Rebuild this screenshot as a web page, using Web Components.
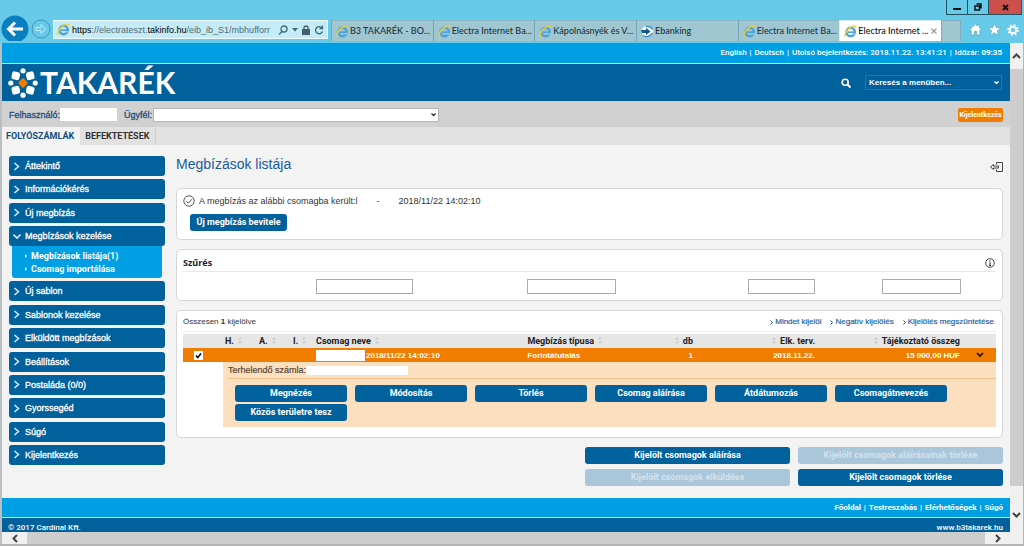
<!DOCTYPE html>
<html lang="hu">
<head>
<meta charset="utf-8">
<title>Electra Internet Banking</title>
<style>
  html, body { margin: 0; height: 100%; overflow: hidden; }
  body { font-family: Roboto, "Liberation Sans", Arial, sans-serif; font-size: 9px; line-height: 12px; color: #333; }
</style>
</head>
<body>
<browser-window></browser-window>

<script>
const define = (name, html) => {
  const tpl = document.createElement('template');
  tpl.innerHTML = html;
  customElements.define(name, class extends HTMLElement {
    constructor() {
      super();
      this.attachShadow({ mode: 'open' }).appendChild(tpl.content.cloneNode(true));
      const label = this.getAttribute('label');
      const target = this.shadowRoot.querySelector('[data-label]');
      if (label && target) target.textContent = label;
      if (this.hasAttribute('disabled')) this.shadowRoot.querySelector('button').disabled = true;
    }
  });
};

define('ie-icon', `
<style>:host{display:block;width:13px;height:13px;flex:none}svg{display:block}</style>
<svg width="13" height="13" viewBox="0 0 13 13" fill="none">
  <circle cx="6.6" cy="7" r="4.2" stroke="#4ba3da" stroke-width="2.4"/>
  <path d="M4 7.2h6.6" stroke="#4ba3da" stroke-width="1.7"/>
  <path d="M8.6 8.8h3" stroke="#a5cfe0" stroke-width="1.2"/>
  <path d="M1.6 11.6C-.4 10 3 4.400 7 2.200c2.600-1.500 5-1.600 4.600.6" stroke="#e9cf3c" stroke-width="1.400"/>
</svg>`);

define('ebank-icon', `
<style>:host{display:block;width:13px;height:13px;flex:none}svg{display:block}</style>
<svg width="13" height="13" viewBox="0 0 13 13">
  <circle cx="6.500" cy="6.500" r="5.800" fill="#f4fafc"/>
  <path d="M0 5h5V3l4.500 3.500L5 10V8H1z" fill="#14558c"/>
  <path d="M2 10.500c3 2 8 1 9.500-2.500M5 1.500c3-.5 5.500 1 6.500 3" fill="none" stroke="#2f86bd" stroke-width="1.300"/>
</svg>`);

define('browser-tab', `
<style>
:host{display:flex;flex:1 1 0;min-width:0;box-sizing:border-box;height:21px;align-items:center;gap:1px;padding:0 4px;
  background:#9fc6d1;border-left:1px solid #6fa6b8;border-top:1px solid #8ab5c2;color:#20343c}
:host([active]){background:#fff;border-color:#d6eef6;color:#111}
span{font:500 9px/14px Lato,"Noto Sans",sans-serif;white-space:nowrap}
.close{margin-left:auto;display:none;border:0;padding:0;background:none}
:host([active]) .close{display:block}
svg{display:block}
</style>
<slot></slot><span data-label></span>
<button class="close" aria-label="Lap bezárása"><svg width="6" height="6" viewBox="0 0 6 6" stroke="#999" stroke-width="1.200"><path d="M.5.5l5 5M5.500.5l-5 5"/></svg></button>`);

define('browser-chrome', `
<style>
:host{display:block;background:#67cae9}
.title{display:flex;justify-content:flex-end;height:14px;padding-right:2px}
.title button{box-sizing:border-box;display:flex;align-items:center;justify-content:center;width:21px;height:15px;padding:0;
  background:#67cae9;border:1px solid #23505f;border-top:0;border-right:0}
.title .x{width:34px;background:#c9504b;border-right:1px solid #7a3a3a}
.nav{display:flex;align-items:flex-end;height:29px;box-sizing:border-box;padding-left:1px}
.nav button{border:0;background:none;padding:0;display:block}
svg{display:block}
.back{height:26px;overflow:hidden;margin-bottom:2px}
.nav .fwd{margin:0 2px 4px 2px}
.addr{display:flex;align-items:center;box-sizing:border-box;width:275px;height:19px;margin-bottom:4px;padding:0 3px;
  background:#c4ebf6;border:1px solid #f2fbfe}
.url{flex:1;min-width:0;margin-left:2px;white-space:nowrap;color:#4c6d79;font:9px/14px "Liberation Sans",Arial,sans-serif}
.url b{font-weight:400;color:#000}
.tools{display:flex;align-items:center;gap:4px;padding-left:3px}
.tabs{display:flex;flex:1;min-width:0;margin:0 8px 2px 3px}
.newtab{box-sizing:border-box;width:20px;height:21px;background:#9fc6d1!important;border:1px solid #7badbd!important;border-bottom:0!important}
.right{display:flex;gap:6px;margin:0 5px 7px 0}
</style>
<div class="title">
  <button aria-label="Kis méret"><svg width="8" height="8"><path d="M0 5h8v2H0z" fill="#111"/></svg></button>
  <button aria-label="Előző méret"><svg width="8" height="8" fill="none" stroke="#111" stroke-width="1.500"><path d="M1 3h4.500v4H1zM2.500 1H7v4.500"/></svg></button>
  <button class="x" aria-label="Bezárás"><svg width="7" height="7" stroke="#111" stroke-width="1.800"><path d="M1 1l5 5M6 1L1 6"/></svg></button>
</div>
<div class="nav">
  <button class="back" aria-label="Vissza"><svg width="28" height="28" viewBox="0 0 28 28"><circle cx="14" cy="14" r="13.500" fill="#0a7fc0"/><path d="M22 14H8M14 7.500L7.500 14l6.500 6.500" fill="none" stroke="#fff" stroke-width="3"/></svg></button>
  <button class="fwd" aria-label="Előre"><svg width="20" height="20" viewBox="0 0 20 20" fill="none"><circle cx="10" cy="10" r="9" stroke="#4493b6"/><path d="M5 8.500h5V5.500L14.500 10 10 14.500v-3H5z" stroke="#c5eefa"/></svg></button>
  <div class="addr">
    <ie-icon></ie-icon>
    <div class="url"><b>https</b>://electrateszt.<b>takinfo.hu</b>/eib_ib_S1/mbhufforr</div>
    <div class="tools">
      <svg width="10" height="10" fill="none" stroke="#3b6a7b" stroke-width="1.300"><circle cx="6" cy="4" r="3"/><path d="M4 6.500L1 9.500"/></svg>
      <svg width="6" height="4"><path d="M0 0h6L3 3.500z" fill="#3b6a7b"/></svg>
      <svg width="8" height="10"><path d="M0 4h8v6H0z" fill="#41606b"/><path d="M2 4.500V3a2 2 0 014 0v1.500" fill="none" stroke="#41606b" stroke-width="1.400"/></svg>
      <svg width="10" height="10" fill="none" stroke="#3b6a7b" stroke-width="1.300"><path d="M8 3A3.600 3.600 0 108.500 6.500M8.500.5V3.500H5.500"/></svg>
    </div>
  </div>
  <div class="tabs">
    <browser-tab label="B3 TAKARÉK - BO..."><ie-icon></ie-icon></browser-tab>
    <browser-tab label="Electra Internet Ba..."><ie-icon></ie-icon></browser-tab>
    <browser-tab label="Kápolnásnyék és V..."><ie-icon></ie-icon></browser-tab>
    <browser-tab label="Ebanking"><ebank-icon></ebank-icon></browser-tab>
    <browser-tab label="Electra Internet Ba..."><ie-icon></ie-icon></browser-tab>
    <browser-tab label="Electra Internet ..." active><ie-icon></ie-icon></browser-tab>
    <button class="newtab" aria-label="Új lap"></button>
  </div>
  <div class="right">
    <button aria-label="Kezdőlap"><svg width="13" height="13" viewBox="0 0 12 12"><path d="M6 1L.5 6.200l.8.800L2 6.400V11h3V7.500h2V11h3V6.400l.7.600.8-.8L9.500 4.300V1.500H8v1.400z" fill="#fff" stroke="#3c8fae" stroke-width=".5"/></svg></button>
    <button aria-label="Kedvencek"><svg width="13" height="13" viewBox="0 0 12 12"><path d="M6 .5l1.600 3.900 4.100.2-3.200 2.600 1.100 4.100L6 9l-3.600 2.300 1.100-4.100L.3 4.600l4.100-.2z" fill="#fff" stroke="#3c8fae" stroke-width=".4"/></svg></button>
    <button aria-label="Eszközök"><svg width="12" height="12" viewBox="0 0 12 12" fill="none" stroke="#fff"><circle cx="6" cy="6" r="3.200" stroke-width="1.800"/><circle cx="6" cy="6" r="4.900" stroke-width="1.800" stroke-dasharray="1.900 1.950"/></svg></button>
  </div>
</div>`);

define('tk-logo', `
<style>
:host{display:flex;align-items:center;gap:2px;color:#fff;font:bold 30px/37px Lato,"Noto Sans",sans-serif}
svg{display:block}
</style>
<svg width="30" height="30" viewBox="-14.500 -14.500 29 29" fill="#fff">
  <rect x="-3.600" y="-3.600" width="7.200" height="7.200" rx="1.500" fill="#ef7d00" transform="rotate(45)"/>
  <circle cy="-11.800" r="2.500"/><circle cy="11.800" r="2.500"/><circle cx="-11.800" r="2.500"/><circle cx="11.800" r="2.500"/>
  <rect x="-3.900" y="-3.900" width="7.800" height="7.800" rx="2.200" transform="translate(-7 -7)rotate(12)"/>
  <rect x="-3.900" y="-3.900" width="7.800" height="7.800" rx="2.200" transform="translate(7 -7)rotate(-12)"/>
  <rect x="-3.900" y="-3.900" width="7.800" height="7.800" rx="2.200" transform="translate(-7 7)rotate(-12)"/>
  <rect x="-3.900" y="-3.900" width="7.800" height="7.800" rx="2.200" transform="translate(7 7)rotate(12)"/>
</svg><span>TAKARÉK</span>`);

define('tk-header', `
<style>
:host{display:block}
a{color:inherit;text-decoration:none}
.top{display:flex;justify-content:flex-end;gap:3px;height:20px;line-height:20px;padding-right:8px;background:#009fe3;color:#fff;font-size:8px;font-weight:500;white-space:nowrap}
.main{display:flex;align-items:center;height:37px;padding:0 8px 0 6px;background:#00619c;border-top:1px solid #bfe0ef;border-bottom:1px solid #bcd3df}
svg{display:block}
.search{margin-left:auto;margin-right:14px;border:0;background:none;padding:0}
select{appearance:none;box-sizing:border-box;width:137px;height:15px;padding:0 3px;border:1px solid #1a7ab2;border-radius:0;color:#fff;
  font:bold 8px/12px "Liberation Sans",Arial,sans-serif;
  background:#00619c url("data:image/svg+xml,%3Csvg xmlns='http://www.w3.org/2000/svg' width='5' height='4' fill='none' stroke='white' stroke-width='1.300'%3E%3Cpath d='M.5.5l2 2 2-2'/%3E%3C/svg%3E") no-repeat right 2px center}
.user{display:flex;align-items:center;height:25px;box-sizing:border-box;padding:0 7px 0 7px;background:#d1d1d1;color:#1b4e81}
label{white-space:nowrap;font-family:"Liberation Sans",Arial,sans-serif;-webkit-text-stroke:.3px}
.user input{box-sizing:border-box;width:57px;height:13px;border:0;padding:0 2px;margin:0 7px 0 0;background:#fff}
.user select{width:286px;height:14px;margin-left:1px;border:1px solid #b5b5b5;color:#333;background-color:#fff;
  background-image:url("data:image/svg+xml,%3Csvg xmlns='http://www.w3.org/2000/svg' width='5' height='4' fill='none' stroke='%23333' stroke-width='1.300'%3E%3Cpath d='M.5.5l2 2 2-2'/%3E%3C/svg%3E")}
.logout{margin-left:auto;width:45px;height:14px;padding:0;border:0;border-radius:2px;background:#f07c00;color:#fff;font:bold 7px/14px Roboto,"Liberation Sans",sans-serif}
nav{display:flex;height:18px;background:#e1e1e1;line-height:18px;font-weight:bold;color:#333}
nav a{padding:0 6px 0 4px;border-right:1px solid #cfcfcf}
nav a[aria-current]{background:#f3f3f3;color:#124b80;border-color:#e1e1e1}
</style>
<div class="top"><a href="#">English</a><span>|</span><a href="#">Deutsch</a><span>|</span><span>Utolsó bejelentkezés: 2018.11.22. 13:41:21</span><span>|</span><span>Időzár: <b>09:35</b></span></div>
<div class="main">
  <tk-logo></tk-logo>
  <button class="search" aria-label="Keresés"><svg width="10" height="10" fill="none" stroke="#fff"><circle cx="4.200" cy="4.200" r="3" stroke-width="1.600"/><path d="M6.500 6.500l3 3" stroke-width="2"/></svg></button>
  <select aria-label="Keresés a menüben"><option>Keresés a menüben...</option></select>
</div>
<div class="user">
  <label for="u">Felhasználó:</label><input id="u" readonly>
  <label for="c">Ügyfél:</label><select id="c"><option></option></select>
  <button class="logout">Kijelentkezés</button>
</div>
<nav><a href="#" aria-current="page">FOLYÓSZÁMLÁK</a><a href="#">BEFEKTETÉSEK</a></nav>`);

define('menu-item', `
<style>
:host{display:block}
a.head{display:flex;align-items:center;height:20px;padding-left:4px;border-radius:3px;background:#00619c;color:#fff;text-decoration:none;font-family:"Liberation Sans",Arial,sans-serif;-webkit-text-stroke:.3px}
svg{display:block;width:8px;margin-right:4px}
.down{display:none}
:host([open]) .down{display:block}
:host([open]) .right{display:none}
:host([open]) slot{display:flex;flex-direction:column;margin:0 3px;padding:3px 0 3px 13px;background:#009fe3;border-radius:0 0 3px 3px}
</style>
<a class="head" href="#">
<svg class="right" width="8" height="9" fill="none" stroke="#cfe8f5" stroke-width="1.600"><path d="M1.500 1l4 3.500-4 3.500"/></svg>
<svg class="down" width="8" height="9" fill="none" stroke="#cfe8f5" stroke-width="1.600"><path d="M.5 2.500L4 6l3.500-3.500"/></svg>
<span data-label></span></a><slot></slot>`);

define('sub-item', `
<style>
:host{display:block}
a{display:flex;align-items:center;gap:4px;height:13px;color:#fff;text-decoration:none;font-weight:bold}
svg{display:block}
</style>
<a href="#"><svg width="2" height="4"><path d="M0 0l2 2-2 2z" fill="#fff"/></svg><span data-label></span></a>`);

define('side-menu', `
<style>
:host{display:flex;flex-direction:column;justify-content:space-between;min-height:309px;width:156px;flex:none}
</style>
<menu-item label="Áttekintő"></menu-item>
<menu-item label="Információkérés"></menu-item>
<menu-item label="Új megbízás"></menu-item>
<menu-item label="Megbízások kezelése" open><sub-item label="Megbízások listája(1)"></sub-item><sub-item label="Csomag importálása"></sub-item></menu-item>
<menu-item label="Új sablon"></menu-item>
<menu-item label="Sablonok kezelése"></menu-item>
<menu-item label="Elküldött megbízások"></menu-item>
<menu-item label="Beállítások"></menu-item>
<menu-item label="Postaláda (0/0)"></menu-item>
<menu-item label="Gyorssegéd"></menu-item>
<menu-item label="Súgó"></menu-item>
<menu-item label="Kijelentkezés"></menu-item>`);

define('tk-button', `
<style>
:host{display:block}
button{display:block;width:100%;height:17px;padding:0 6px;border:0;border-radius:3px;background:#00619c;color:#fff;
  font:bold 9px/17px Roboto,"Liberation Sans",sans-serif;text-align:center;white-space:nowrap}
button:disabled{background:#a9c6da;color:#d3e2ec}
</style>
<button data-label></button>`);

define('tk-panel', `
<style>
:host{display:block;box-sizing:border-box;background:#fff;border:1px solid #d6d6d6;border-radius:5px;padding:0 6px}
</style><slot></slot>`);

define('message-panel', `
<style>
:host{display:block}
.msg{display:flex;align-items:center;height:24px;gap:4px;font-family:"Liberation Sans",Arial,sans-serif}
.msg svg{display:block}
.gap{width:11px}
tk-button{width:97px;margin:1px 0 8px 7px}
</style>
<tk-panel>
<div class="msg"><svg width="12" height="12" fill="none" stroke="#555"><circle cx="6" cy="6" r="5.200"/><path d="M3.300 6.200l2 2 3.700-4"/></svg>
<span>A megbízás az alábbi csomagba került:l</span><span class="gap"></span><span>-</span><span class="gap"></span><time>2018/11/22 14:02:10</time></div>
<tk-button label="Új megbízás bevitele"></tk-button>
</tk-panel>`);

define('filter-panel', `
<style>
:host{display:block}
.head{display:flex;align-items:center;justify-content:space-between;box-sizing:border-box;height:22px;padding:5px 1px 0 0;border-bottom:1px solid #e8e8e8}
h2{margin:0;font:bold 9px/14px "Open Sans","Noto Sans",sans-serif;color:#222}
svg{display:block}
form{display:grid;grid-template-columns:133px 26% 1fr 67px 67px 79px 35px;height:28px;align-items:center}
input{box-sizing:border-box;height:15px;padding:0 2px;border:1px solid #aaa;background:#fff}
.a{grid-column:2;width:97px}.b{grid-column:3;width:89px}.c{grid-column:4}.d{grid-column:6}
</style>
<tk-panel>
<div class="head"><h2>Szűrés</h2><svg width="10" height="10" fill="none" stroke="#444"><circle cx="5" cy="5" r="4.300"/><path d="M5 4.300V8M5 2.200v1.300M4 7.500h2" stroke-width="1.200"/></svg></div>
<form><input class="a" aria-label="Csomag neve"><input class="b" aria-label="Megbízás típusa"><input class="c" aria-label="Elk. terv."><input class="d" aria-label="Tájékoztató összeg"></form>
</tk-panel>`);

define('sort-mark', `
<style>:host{display:inline-block;width:4px;height:7px;margin:0 4px}svg{display:block}</style>
<svg width="4" height="7" fill="#c8c8c8"><path d="M0 2.500L2 0l2 2.500zM0 4.500L2 7l2-2.500z"/></svg>`);

define('package-table', `
<style>
:host{display:block}
.bar{display:flex;align-items:center;gap:9px;height:18px;padding:2px 2px 0 0;border-bottom:1px solid #eee;font:8px/12px "Liberation Sans",Arial,sans-serif}
.bar a{color:#1b66a8;text-decoration:none;display:flex;align-items:center;gap:2px;-webkit-text-stroke:.2px}
.bar a:first-of-type{margin-left:auto}
svg{display:block}
table{width:100%;table-layout:fixed;border-collapse:collapse;margin:2px 0 10px}
th,td{padding:0 2px;text-align:left;white-space:nowrap;font-weight:bold}
thead th{height:14px;line-height:14px;background:#e6e6e6;color:#222}
.r{text-align:right}
.row td{height:14px;line-height:13px;background:#f07c00;color:#fff;font-family:"Liberation Sans",Arial,sans-serif;font-size:8px}
.mask{display:inline-block;width:49px;height:11px;background:#fff;vertical-align:middle;margin-right:1px}
input{appearance:none;box-sizing:border-box;display:block;width:9px;height:9px;margin:0 0 0 9px;
 background:#fff url("data:image/svg+xml,%3Csvg xmlns='http://www.w3.org/2000/svg' width='9' height='9' fill='none' stroke='black' stroke-width='1.500'%3E%3Cpath d='M2 4.500l1.800 2L7 2.500'/%3E%3C/svg%3E") center no-repeat}
.detail td{padding:0}
.box{box-sizing:border-box;height:65px;background:#fcdfbf;padding-left:5px;color:#5a4632}
.acct{display:flex;align-items:center;gap:0;height:16px;border-bottom:1px solid #f4c18c;font-weight:normal;font-family:"Liberation Sans",Arial,sans-serif;-webkit-text-stroke:.2px}
.acct i{width:102px;height:9px;background:#fff}
.acts{display:flex;flex-wrap:wrap;gap:2px 8px;padding:6px 0 0 7px}
.acts tk-button{width:112px}
</style>
<tk-panel>
<div class="bar"><span>Összesen <b>1</b> kijelölve</span>
<a href="#"><svg width="3" height="5" fill="none" stroke="#1b4e81"><path d="M.5.5l2 2-2 2"/></svg>Mindet kijelöl</a>
<a href="#"><svg width="3" height="5" fill="none" stroke="#1b4e81"><path d="M.5.5l2 2-2 2"/></svg>Negatív kijelölés</a>
<a href="#"><svg width="3" height="5" fill="none" stroke="#1b4e81"><path d="M.5.5l2 2-2 2"/></svg>Kijelölés megszüntetése</a></div>
<table>
<colgroup><col style="width:40px"><col style="width:34px"><col style="width:34px"><col style="width:23px"><col style="width:26%"><col><col style="width:60px"><col style="width:122px"><col style="width:145px"><col style="width:34px"></colgroup>
<thead><tr><th></th><th>H.<sort-mark></sort-mark></th><th>A.<sort-mark></sort-mark></th><th>I.<sort-mark></sort-mark></th><th>Csomag neve<sort-mark></sort-mark></th><th>Megbízás típusa<sort-mark></sort-mark></th><th class="r"><sort-mark></sort-mark>db</th><th class="r"><sort-mark></sort-mark>Elk. terv.</th><th class="r"><sort-mark></sort-mark>Tájékoztató összeg</th><th></th></tr></thead>
<tbody><tr class="row"><td><input type="checkbox" checked aria-label="Csomag kijelölése"></td><td></td><td></td><td></td><td><span class="mask"></span>2018/11/22 14:02:10</td><td>Forintátutalás</td><td class="r">1</td><td class="r">2018.11.22.</td><td class="r">15 000,00 HUF</td>
<td><svg width="8" height="6" style="margin-left:12px" fill="none" stroke="#111" stroke-width="1.600"><path d="M1 1l3 3 3-3"/></svg></td></tr>
<tr class="detail"><td></td><td colspan="9"><div class="box"><div class="acct">Terhelendő számla:<i></i></div>
<div class="acts"><tk-button label="Megnézés"></tk-button><tk-button label="Módosítás"></tk-button><tk-button label="Törlés"></tk-button><tk-button label="Csomag aláírása"></tk-button><tk-button label="Átdátumozás"></tk-button><tk-button label="Csomagátnevezés"></tk-button><tk-button label="Közös területre tesz"></tk-button></div></div></td></tr></tbody>
</table>
</tk-panel>`);

define('orders-page', `
<style>
:host{display:flex;flex-direction:column;flex:1;min-width:0}
.title{display:flex;align-items:flex-start;justify-content:space-between;height:19px;margin-bottom:13px}
h1{margin:0;font:14px/16px "Liberation Sans",Arial,sans-serif;color:#1a5a9c}
svg{display:block}
.title button{border:0;background:none;padding:6px 0 0}
message-panel,filter-panel{margin-bottom:9px}
.bulk{display:grid;grid-template-columns:205px 205px;gap:5px 8px;justify-content:end;margin-top:9px}
</style>
<div class="title"><h1>Megbízások listája</h1><button aria-label="Kilépés"><svg width="13" height="10" fill="none" stroke="#444"><path d="M6.500 2.500v-2h6v9h-6v-2M.5 5l3-2.500v1.500h5v2h-5v1.500z"/></svg></button></div>
<message-panel></message-panel>
<filter-panel></filter-panel>
<package-table></package-table>
<div class="bulk"><tk-button label="Kijelölt csomagok aláírása"></tk-button><tk-button label="Kijelölt csomagok aláírásainak törlése" disabled></tk-button>
<tk-button label="Kijelölt csomagok elküldése" disabled></tk-button><tk-button label="Kijelölt csomagok törlése"></tk-button></div>`);

define('tk-footer', `
<style>
:host{display:block;color:#fff;font-size:8px;font-weight:bold}
a{color:inherit;text-decoration:none}
.links{display:flex;justify-content:flex-end;gap:3px;height:19px;line-height:19px;padding-right:7px;background:#009fe3}
.legal{display:flex;justify-content:space-between;height:20px;line-height:20px;padding:0 7px 0 6px;background:#00619c;border-top:1px solid #bfe0ef}
.legal{font-weight:500}
</style>
<div class="links"><a href="#">Főoldal</a><span>|</span><a href="#">Testreszabás</a><span>|</span><a href="#">Elérhetőségek</a><span>|</span><a href="#">Súgó</a></div>
<div class="legal"><span>© 2017 Cardinal Kft.</span><a href="#">www.b3takarek.hu</a></div>`);

define('browser-window', `
<style>
:host{display:grid;grid-template-rows:auto minmax(0,1fr) 12px;grid-template-columns:minmax(0,1fr) 14px;height:100vh;box-sizing:border-box;
  border-bottom:2px solid #b4b4b4;background:#f0f0f0}
browser-chrome{grid-column:1/3}
.view{overflow:hidden;border-left:2px solid #b9c0c4;background:#f3f3f3}
.content{display:flex;align-items:flex-start;gap:11px;padding:11px 7px 12px}
.v{display:flex;flex-direction:column;align-items:center;background:#f0f0f0;border-right:1px solid #b4b4b4}
.v .up{height:26px}.v .thumb{flex:1;width:100%;background:#cdcdcd}.v .down{height:46px}
.h{display:flex;border-left:2px solid #b9c0c4}
.h .btn{width:25px}.h .thumb{flex:1;background:#cdcdcd}
.up,.down,.btn{display:flex;align-items:center;justify-content:center}
.corner{border-right:1px solid #b4b4b4}
svg{display:block}
</style>
<browser-chrome></browser-chrome>
<div class="view">
  <tk-header></tk-header>
  <div class="content"><side-menu></side-menu><orders-page></orders-page></div>
  <tk-footer></tk-footer>
</div>
<div class="v"><div class="up"><svg width="9" height="6" fill="none" stroke="#444" stroke-width="2"><path d="M1 5l3.500-3.500L8 5"/></svg></div><div class="thumb"></div>
<div class="down"><svg width="9" height="6" fill="none" stroke="#444" stroke-width="2" style="margin-top:12px"><path d="M1 1l3.500 3.500L8 1"/></svg></div></div>
<div class="h"><div class="btn"><svg width="6" height="9" fill="none" stroke="#444" stroke-width="2"><path d="M5 1L1.500 4.500 5 8"/></svg></div><div class="thumb"></div>
<div class="btn"><svg width="6" height="9" fill="none" stroke="#444" stroke-width="2"><path d="M1 1l3.500 3.500L1 8"/></svg></div></div>
<div class="corner"></div>`);
</script>
</body>
</html>
